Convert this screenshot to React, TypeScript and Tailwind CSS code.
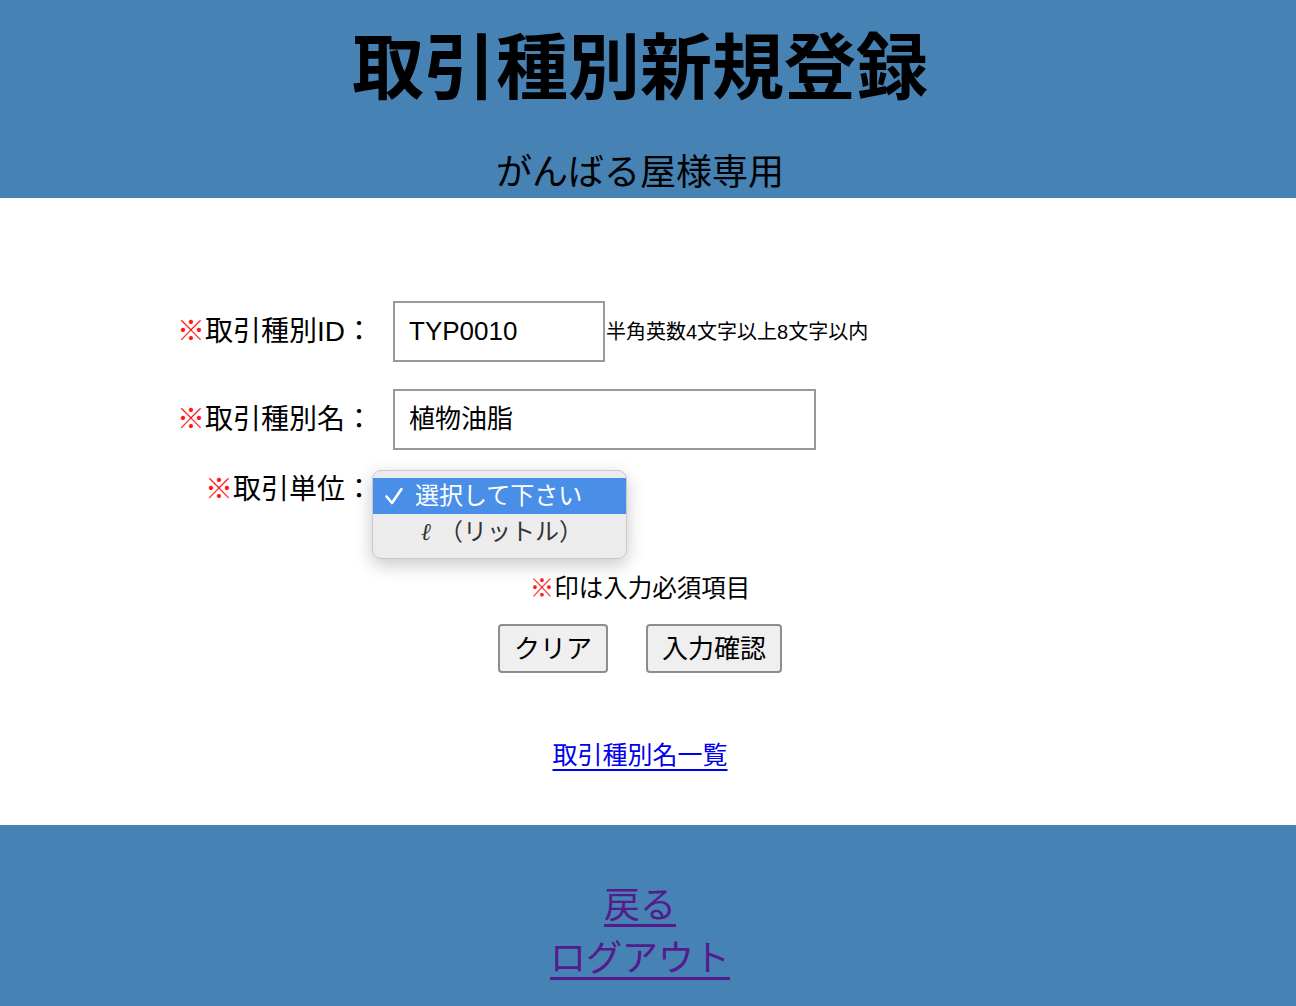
import React from "react";

const jp = { fontFamily: '"Liberation Sans", "Noto Sans CJK JP", sans-serif' };

export default function App() {
  return (
    <div className="w-full min-h-[1006px] bg-white text-black" style={jp}>
      <header className="w-full h-[198px] bg-[#4682b4] flex flex-col items-center pr-[16px]">
        <h1 className="mt-[32px] text-[72px] leading-[72px] font-bold">取引種別新規登録</h1>
        <p className="mt-[49px] text-[36px] leading-[40px]">がんばる屋様専用</p>
      </header>

      <main className="w-full h-[627px] pt-[103px]">
        <div className="flex items-center h-[61px]">
          <div className="w-[373px] text-right text-[28px] leading-[40px] shrink-0">
            <span className="text-[#ff1a1a]">※</span>取引種別ID：
          </div>
          <div className="ml-[20px] w-[212px] h-[61px] border-2 border-[#9a9a9a] flex items-center pl-[14px] text-[26px] shrink-0">
            TYP0010
          </div>
          <span className="text-[20px] leading-[24px] ml-[1px]">半角英数4文字以上8文字以内</span>
        </div>

        <div className="flex items-center h-[61px] mt-[27px]">
          <div className="w-[373px] text-right text-[28px] leading-[40px] shrink-0">
            <span className="text-[#ff1a1a]">※</span>取引種別名：
          </div>
          <div className="ml-[20px] w-[423px] h-[61px] border-2 border-[#9a9a9a] flex items-center pl-[14px] text-[26px] shrink-0">
            植物油脂
          </div>
        </div>

        <div className="relative flex items-center h-[40px] mt-[20px]">
          <div className="w-[373px] text-right text-[28px] leading-[40px] shrink-0">
            <span className="text-[#ff1a1a]">※</span>取引単位：
          </div>
          <div className="absolute left-[372px] top-0 w-[255px] h-[89px] rounded-[9px] bg-[#ececec] border border-[#c9c9c9] shadow-[0_6px_18px_rgba(0,0,0,0.22)] py-[7px] overflow-hidden">
            <div className="h-[36px] bg-[#4a8fe7] text-white flex items-center text-[24px]">
              <span className="w-[42px] flex justify-center">
                <svg width="20" height="20" viewBox="0 0 20 20">
                  <path d="M2.5 10.5 L8 17 L17.5 3" stroke="white" strokeWidth="2.6" fill="none" strokeLinecap="round" strokeLinejoin="round" />
                </svg>
              </span>
              <span>選択して下さい</span>
            </div>
            <div className="h-[36px] text-[#333] flex items-center text-[24px] pl-[40px]">
              <span className="italic w-[26px] text-center" style={{ fontFamily: '"DejaVu Serif", serif' }}>ℓ</span>
              <span>（リットル）</span>
            </div>
          </div>
        </div>

        <div className="flex flex-col items-center pr-[16px]">
          <p className="mt-[61px] text-[24.5px] leading-[36px]">
            <span className="text-[#ff1a1a]">※</span>印は入力必須項目
          </p>
          <div className="mt-[17px] flex gap-[38px]">
            <button className="h-[49px] px-[14px] border-2 border-[#8d8d8d] rounded-[4px] bg-[#efefef] text-[26px] leading-[30px]">クリア</button>
            <button className="h-[49px] px-[14px] border-2 border-[#8d8d8d] rounded-[4px] bg-[#efefef] text-[26px] leading-[30px]">入力確認</button>
          </div>
          <a href="#" className="mt-[64px] text-[25px] leading-[36px] text-[#0000ee] underline underline-offset-[5px]">取引種別名一覧</a>
        </div>
      </main>

      <footer className="w-full h-[181px] bg-[#4682b4] flex flex-col items-center pt-[54px] pr-[16px]">
        <a href="#" className="text-[36px] leading-[53px] text-[#551a8b] underline underline-offset-[6px]">戻る</a>
        <a href="#" className="text-[36px] leading-[53px] text-[#551a8b] underline underline-offset-[6px]">ログアウト</a>
      </footer>
    </div>
  );
}
